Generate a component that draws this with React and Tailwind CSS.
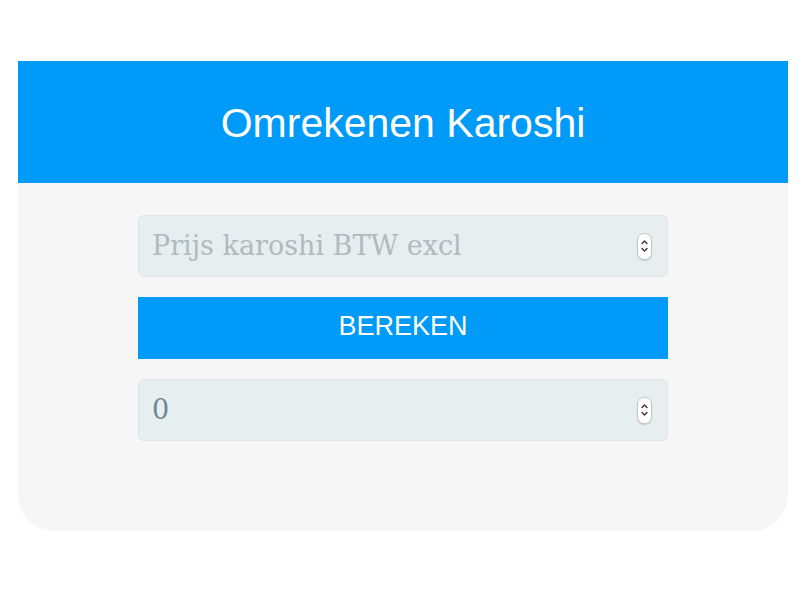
function Spinner() {
  return (
    <span className="flex h-[27px] w-[15px] flex-col items-center justify-center rounded-[7px] border border-[#c4c8ca] bg-white shadow-[0_1px_1px_rgba(0,0,0,0.15)]">
      <svg width="9" height="18" viewBox="0 0 9 18" fill="none" stroke="#333" strokeWidth="1.4" strokeLinecap="round" strokeLinejoin="round">
        <path d="M2 6.5 L4.5 4 L7 6.5" />
        <path d="M2 11.5 L4.5 14 L7 11.5" />
      </svg>
    </span>
  );
}

function NumberField({ placeholder, value }) {
  return (
    <div className="flex h-[62px] items-center rounded-[6px] border border-[#dde5e8] bg-[#e6eef0] pl-[13px] pr-[15px]">
      <input
        type="text"
        readOnly
        placeholder={placeholder}
        defaultValue={value}
        className="min-w-0 flex-1 bg-transparent font-['DejaVu_Serif',serif] text-[27px] text-[#6e8792] outline-none placeholder:text-[#b1babe]"
      />
      <Spinner />
    </div>
  );
}

export default function App() {
  return (
    <div className="min-h-[610px] w-[810px] bg-white pt-[61px] font-['Liberation_Sans',Arial,sans-serif]">
      <div className="ml-[18px] w-[770px] overflow-hidden rounded-b-[36px] bg-[#f6f6f6]">
        <header className="flex h-[122px] items-center justify-center bg-[#009af8] pt-[4px]">
          <h1 className="text-[41px] text-white">Omrekenen Karoshi</h1>
        </header>
        <div className="flex flex-col gap-[20px] px-[120px] pb-[90px] pt-[32px]">
          <NumberField placeholder="Prijs karoshi BTW excl" />
          <button type="button" className="h-[62px] bg-[#009af8] pb-[3px] text-[27px] text-white">
            BEREKEN
          </button>
          <NumberField value="0" />
        </div>
      </div>
    </div>
  );
}
